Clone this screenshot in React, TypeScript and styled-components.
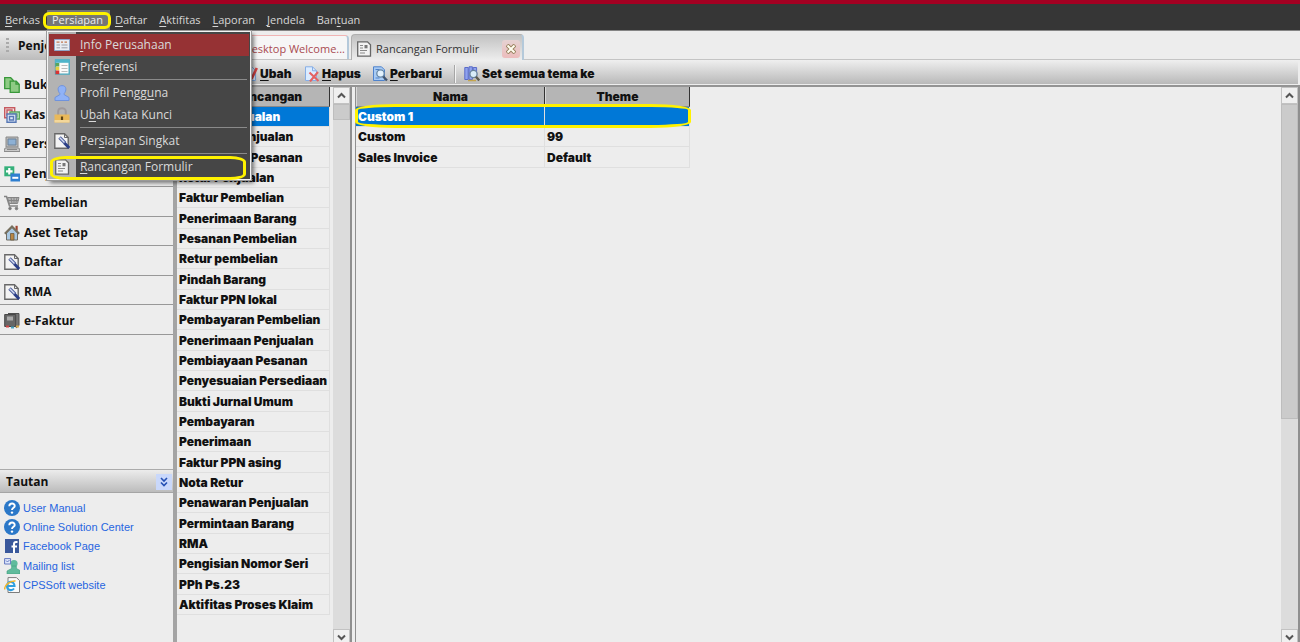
import React from "react";
import styled, { createGlobalStyle, css } from "styled-components";

const ui = `"Open Sans", "Noto Sans", sans-serif`;
const heavy = `Inter, "Liberation Sans", sans-serif`;

const GlobalStyle = createGlobalStyle`
  * { box-sizing: border-box; }
  body { margin: 0; background: #ededed; color: #111; font: 12px/16px ${ui}; }
  button { font: inherit; color: inherit; border: 0; background: none; padding: 0; margin: 0; text-align: left; }
  svg { flex: none; }
  u { text-underline-offset: 2px; }
`;

const App_ = styled.div`
  display: flex;
  flex-direction: column;
  height: 100vh;
  overflow: hidden;
  border-top: 4px solid #a30022;
`;

const MenuBar = styled.nav`
  display: flex;
  flex: none;
  align-items: center;
  height: 27px;
  padding-top: 6px;
  background: #363636;
  border-bottom: 1px solid #858585;
  color: #d6d6d6;
  font-size: 11px;
`;

const MenuSlot = styled.div`
  position: relative;
`;

const MenuButton = styled.button<{ $open?: boolean }>`
  display: block;
  height: 20px;
  padding: 0 7px 0 5px;
  line-height: 20px;
  white-space: nowrap;
  ${(p) => p.$open && css`
    background: #767676;
    color: #ececec;
  `}
`;

const Ring = styled.span<{ $inset: string; $radius: string }>`
  position: absolute;
  inset: ${(p) => p.$inset};
  border: 3px solid #fff200;
  border-radius: ${(p) => p.$radius};
  pointer-events: none;
  z-index: 2;
`;

const DropDown = styled.div`
  position: absolute;
  top: 21px;
  left: 0;
  z-index: 10;
  width: 204px;
  padding: 2px 1px 1px;
  background: linear-gradient(90deg, #b3b3b3 28px, #464646 28px);
  border: 1px solid #f4f4f4;
  outline: 1px solid #9a9a9a;
  box-shadow: 3px 3px 4px rgba(0, 0, 0, 0.5);
  font-size: 12px;
`;

const DropItem = styled.button<{ $hot?: boolean }>`
  position: relative;
  display: flex;
  align-items: center;
  width: 100%;
  height: 22px;
  padding-left: 5px;
  gap: 10px;
  white-space: nowrap;
  background: ${(p) => (p.$hot ? "#963234" : "transparent")};
  color: #dadada;
`;

const DropLine = styled.hr`
  height: 1px;
  margin: 1px 2px 2px 31px;
  border: 0;
  background: #8a8a8a;
`;

const Body = styled.div`
  display: flex;
  flex: 1;
  min-height: 0;
`;

const Sidebar = styled.aside`
  display: flex;
  flex-direction: column;
  flex: none;
  width: 177px;
  border-right: 4px solid #a4a4a4;
`;

const SideTitle = styled.h2`
  display: flex;
  align-items: center;
  gap: 9px;
  height: 29px;
  margin: 0 0 9px;
  padding-left: 6px;
  font: 700 12px/16px ${ui};
  background: linear-gradient(#f0f0f0, #bcbcbc);
`;

const Grip = styled.span`
  width: 3px;
  height: 15px;
  background: repeating-linear-gradient(#aaa 0 2px, transparent 2px 4px);
`;

const SideItem = styled.button`
  display: flex;
  align-items: center;
  gap: 4px;
  width: 100%;
  height: 30px;
  padding: 3px 0 0 4px;
  border-bottom: 1px solid #989898;
  font-weight: 700;
  &:nth-of-type(even) { height: 29px; }
`;

const LinksTitle = styled.h2`
  display: flex;
  align-items: center;
  justify-content: space-between;
  height: 24px;
  margin: auto 0 0;
  padding: 2px 1px 0 6px;
  border-top: 1px solid #ababab;
  border-bottom: 1px solid #a5a5a5;
  font: 700 12px/16px ${ui};
  background: linear-gradient(#ececec, #bcbcbc);
`;

const Collapse = styled.button`
  display: flex;
  width: 16px;
  height: 16px;
  align-items: center;
  justify-content: center;
  background: #c9d8fb;
`;

const LinkList = styled.div`
  display: flex;
  flex-direction: column;
  height: 149px;
  padding: 5px 0 0 4px;
`;

const SideLink = styled.a`
  display: flex;
  align-items: center;
  gap: 3px;
  height: 19px;
  font: 11px/16px "Liberation Sans", sans-serif;
  color: #2765e0;
  text-decoration: none;
  &:nth-of-type(3n) { height: 20px; }
`;

const Main = styled.main`
  display: flex;
  flex: 1;
  flex-direction: column;
  min-width: 0;
`;

const Tabs = styled.div`
  display: flex;
  flex: none;
  align-items: flex-end;
  gap: 2px;
  height: 29px;
  border-bottom: 1px solid #c4c4c4;
  font-size: 11px;
`;

const Tab = styled.button<{ $active?: boolean }>`
  display: flex;
  align-items: center;
  justify-content: flex-end;
  gap: 4px;
  width: ${(p) => (p.$active ? "173px" : "172px")};
  height: 24px;
  padding: 2px 2px 0 4px;
  border-radius: 4px 4px 0 0;
  white-space: nowrap;
  color: ${(p) => (p.$active ? "#333" : "#a94a50")};
  border: 1px solid ${(p) => (p.$active ? "#b0b0b0" : "#f0b4b4")};
  border-right: 2px solid #b4c9da;
  border-bottom: 0;
  background: ${(p) => (p.$active ? "linear-gradient(#c2c2c2, #ededed)" : "#f6f6f6")};
  ${(p) => p.$active && css`
    margin-bottom: -1px;
    height: 26px;
  `}
`;

const TabClose = styled.span`
  display: flex;
  width: 18px;
  height: 18px;
  margin-left: auto;
  align-items: center;
  justify-content: center;
  border-radius: 3px;
  background: linear-gradient(#e6d2d2, #ecbcbc);
`;

const ToolBar = styled.div`
  display: flex;
  flex: none;
  align-items: center;
  height: 24px;
  padding: 3px 0 0 3px;
  margin-right: 2px;
  background: linear-gradient(#efefef, #b9b9b9);
  font: 900 12px/16px ${heavy};
`;

const Tool = styled.button<{ $width?: number }>`
  display: flex;
  align-items: center;
  gap: 2px;
  width: ${(p) => (p.$width ? `${p.$width}px` : "auto")};
  white-space: nowrap;
`;

const ToolDivider = styled.span`
  width: 2px;
  height: 18px;
  margin-right: 8px;
  border-left: 1px solid #a6a6a6;
  border-right: 1px solid #f4f4f4;
`;

const Panels = styled.div`
  display: flex;
  flex: 1;
  min-height: 0;
  border-top: 2px solid #949494;
  margin-top: 1px;
`;

const Panel = styled.section<{ $width?: number }>`
  display: flex;
  justify-content: space-between;
  align-items: flex-start;
  flex: ${(p) => (p.$width ? `0 0 ${p.$width}px` : "1")};
  min-width: 0;
  border-right: 2px solid #8f8f8f;
`;

const Splitter = styled.div`
  width: 4px;
  flex: none;
  border-right: 1px solid #8f8f8f;
`;

const GridWrap = styled.div`
  position: relative;
`;

const Grid = styled.table`
  border-collapse: separate;
  border-spacing: 0;
  table-layout: fixed;
  font: 900 12px/16px ${heavy};

  th, td {
    padding: 1px 2px 0;
    white-space: nowrap;
    overflow: hidden;
  }
  th {
    height: 20px;
    font-weight: 900;
    text-align: center;
    background: #b5b5b5;
    border-left: 1px solid #d8d8d8;
    border-right: 1px solid #333;
    border-bottom: 1px solid #8a8a8a;
  }
  td {
    height: 20px;
    border-right: 1px solid #dfdfdf;
    border-bottom: 1px solid #dfdfdf;
  }
  tbody tr:nth-child(3n) td { height: 21px; }
`;

const Row = styled.tr<{ $selected?: boolean }>`
  ${(p) => p.$selected && css`
    background: #0078d7;
    color: #fff;
  `}
`;

const ScrollBar = styled.div`
  display: flex;
  flex-direction: column;
  width: 17px;
  height: calc(100% + 4px);
  flex: none;
  background: #dcdcdc;
`;

const Arrow = styled.button`
  display: flex;
  flex: none;
  height: 17px;
  align-items: center;
  justify-content: center;
  background: #f0f0f0;
  border: 1px solid #c2c2c2;
`;

const Track = styled.div`
  flex: 1;
`;

const Thumb = styled.div<{ $size: number }>`
  height: ${(p) => p.$size}%;
  background: #cbcbcb;
  border: 1px solid #bdbdbd;
`;

type IconName =
  | "books" | "cash" | "computer" | "sales" | "cart" | "house" | "tool" | "efaktur"
  | "help" | "facebook" | "mail" | "ie" | "card" | "prefs" | "user" | "lock" | "form"
  | "new" | "edit" | "delete" | "refresh" | "theme";

const shapes: Record<IconName, React.ReactNode> = {
  books: (
    <g fill="#8ecb84" stroke="#38983a" strokeWidth="1.3">
      <path d="M.7.7h6l2.500 2.500v8.500h-8.500z" />
      <path d="M6.200 4.200h6l3 3v8.100h-9z" />
      <path d="M12 4.200v3h3" fill="none" />
    </g>
  ),
  cash: (
    <g fill="#f2e4e4" strokeWidth="1.4">
      <path d="M.7.7h10v10h-10zM3 3h5v5H3z" stroke="#c65a60" />
      <path d="M6 5h9.300v7H6zM8 7h5v3H8z" stroke="#5aa860" fill="#e3f2e4" />
      <path d="M3 7h9v8.300H3zM5.500 9.500h4v3.500h-4z" stroke="#5878b4" fill="#dfe8f6" />
    </g>
  ),
  computer: (
    <g>
      <path d="M2 1h12v10H2z" fill="#b8b8b8" stroke="#888" />
      <path d="M4 3h8v6H4z" fill="#8db0d4" stroke="#6c8299" />
      <path d="M1 12h14l1 3.500H0z" fill="#c9c9c9" stroke="#8b8b8b" />
      <path d="M3 13.500h10" stroke="#888" />
    </g>
  ),
  sales: (
    <g>
      <path d="M.3.300h10v10H.3z" fill="#35b07a" />
      <path d="M5.300 2v6.600M2 5.300h6.600" stroke="#fff" strokeWidth="2.200" />
      <path d="M6.500 7.500H16v8H6.500z" fill="#2f7fd0" />
      <path d="M8.300 10.800h6v2h-6z" fill="#fff" />
    </g>
  ),
  cart: (
    <g fill="none" stroke="#858585">
      <path d="M0 1.500h2.500L5.500 11H14" strokeWidth="1.600" />
      <path d="M3.500 2.500H15l-1.500 6H5.200z" fill="#b4b4b4" />
      <path d="M7 2.500l1 6M10 2.500v6M13 2.500l-1.200 6M4 5.500h10.500" />
      <circle cx="6" cy="13.500" r="1.300" fill="#777" />
      <circle cx="12.500" cy="13.500" r="1.300" fill="#777" />
    </g>
  ),
  house: (
    <g>
      <path d="M11.500.8h2.200v5h-2.200z" fill="#a0442e" />
      <path d="M2.500 8L8 2.500 13.500 8v7h-11z" fill="#a9c8e2" stroke="#6f6c64" />
      <path d="M.8 8.800L8 1.500l7.200 7.300" fill="none" stroke="#77705f" strokeWidth="2" />
      <path d="M6.500 8.500H10V15H6.500z" fill="#b98745" stroke="#6b5a40" strokeWidth=".8" />
    </g>
  ),
  tool: (
    <g>
      <path d="M.8.800h9.700l3.700 3.700v10.700H.8z" fill="#f4f4f4" stroke="#686868" strokeWidth="1.400" />
      <path d="M10.500.8v3.700h3.700" fill="none" stroke="#686868" />
      <path d="M5.500 4.500l5.500 5.500" stroke="#4d5f9d" strokeWidth="3.400" />
      <path d="M5.800 4.800l4.700 4.700" stroke="#d7def2" strokeWidth="1.300" />
      <path d="M10.500 10l4.700 5" stroke="#2b3f87" strokeWidth="3" />
    </g>
  ),
  efaktur: (
    <g>
      <path d="M4 .500h11v12l-3 2.500" fill="#777" stroke="#505050" />
      <path d="M.7 1.500h11v12H.7z" fill="#666" stroke="#484848" />
      <path d="M3 3.500h6v4H3z" fill="#aaa" />
      <path d="M2 13.500h3" stroke="#cf4546" strokeWidth="2" />
      <path d="M7 14.500h3" stroke="#48a5c4" strokeWidth="2" />
      <path d="M12 13.500h3" stroke="#d7a748" strokeWidth="2" />
    </g>
  ),
  help: (
    <g>
      <circle cx="8" cy="8" r="8" fill="#2b78c8" />
      <path d="M5.300 6.200C5.400 2.600 11 2.800 10.700 6.100 10.600 7.800 8 8 8 10.100" fill="none" stroke="#fff" strokeWidth="1.900" />
      <circle cx="8" cy="12.600" r="1.200" fill="#fff" />
    </g>
  ),
  facebook: (
    <g>
      <path d="M1 1h14v14H1z" fill="#3a589b" />
      <path d="M13.500 4H12q-2 0-2 2v9M7.500 8.500H13" fill="none" stroke="#fff" strokeWidth="2" />
    </g>
  ),
  mail: (
    <g>
      <circle cx="10" cy="5.500" r="3.600" fill="#5fbb9c" />
      <path d="M7.800 8h4.400l.3 2.500 3.500 2V16H3v-3l4.500-2.500z" fill="#5fbb9c" stroke="#3f9d7e" strokeWidth=".6" />
      <path d="M.6.600h6V6h-6z" fill="#dfe7fb" stroke="#6478c0" />
      <path d="M2 2.500L3.500 4l2-2" fill="none" stroke="#6478c0" />
    </g>
  ),
  ie: (
    <g>
      <path d="M4 .600h8.500l3 3v11.900H4z" fill="#fafafa" stroke="#7d7d7d" />
      <path d="M10 11.500c-2 2.800-7 2-7-2.500 0-5.500 7.500-5.500 7.500 0h-7" fill="none" stroke="#2f9fe0" strokeWidth="2.100" />
      <path d="M.6 12.500C.5 8 6 3.500 11.500 4" fill="none" stroke="#efb52c" strokeWidth="1.500" />
    </g>
  ),
  card: (
    <g>
      <path d="M.5 2.500h15v11H.5z" fill="#e9ecf2" stroke="#8fa5c8" />
      <path d="M2.500 5.200h3M7 5.200h2M10.500 5.200h2.500" stroke="#c27852" strokeWidth="1.200" />
      <path d="M2.500 8h3.500M7.500 8h6M2.500 10.800h3.500M7.500 10.800h6" stroke="#9a9da5" />
    </g>
  ),
  prefs: (
    <g>
      <path d="M1.500.800h13.700v14.400H1.500z" fill="#fafafa" stroke="#46a6bd" strokeWidth="1.300" />
      <path d="M1 .500h14.700v3.300H1z" fill="#4fb4ca" />
      <path d="M1.500 4h3.800v3.500H1.500z" fill="#5aa55c" />
      <path d="M1.500 7.800h3.800v3.500H1.500z" fill="#e4ce42" />
      <path d="M1.500 11.500h3.800v3.700H1.500z" fill="#d93434" />
      <path d="M7.500 6.500h6M7.500 9.500h6M7.500 12.500h6" stroke="#bbb" />
    </g>
  ),
  user: (
    <path d="M8 .600c5 0 4.500 5.500 2.200 7.800v1.300l4.800 2.800v3H1v-3l4.800-2.800V8.400C3.500 6.100 3 .6 8 .6z" fill="#90b2f7" stroke="#6f93dd" />
  ),
  lock: (
    <g>
      <path d="M4.200 8V4.500c0-4.500 7.600-4.500 7.600 0V8" fill="none" stroke="#a09a9c" strokeWidth="2" />
      <path d="M.5 7.500h15v8H.5z" fill="#e9b95a" />
      <path d="M.5 13h15v2.500H.5z" fill="#f3d79a" />
      <path d="M8 9.500V13" stroke="#5e4517" strokeWidth="2.200" />
    </g>
  ),
  form: (
    <g>
      <path d="M1.700.800h9.800l3 3v11.400H1.700z" fill="#f2f2f2" stroke="#666" strokeWidth="1.300" />
      <path d="M4 4.500h3M4 7h3M4 9.500h7M4 12h5" stroke="#888" />
      <path d="M8.500 4h3v3.300h-3z" fill="#777" />
    </g>
  ),
  new: <path d="M2.500 1.500h8l3 3v10h-11z" fill="#dcecff" stroke="#7ba6dd" />,
  edit: (
    <g>
      <path d="M2.500 1.500h8l3 3v10h-11z" fill="#dcecff" stroke="#7ba6dd" />
      <path d="M14.800 2l-5.300 11" stroke="#d34242" strokeWidth="2.600" />
    </g>
  ),
  delete: (
    <g>
      <path d="M1.500.800h7l4 4v9.700h-11z" fill="#dcecff" stroke="#86aee6" />
      <path d="M8.500.8v4h4" fill="none" stroke="#86aee6" />
      <path d="M5.500 6.500l9 8.500M14 6l-8 9.500" stroke="#e46262" strokeWidth="2.100" />
    </g>
  ),
  refresh: (
    <g>
      <path d="M1.500.800h8l3 3v10.700h-11z" fill="#a8cbf4" stroke="#4f83cc" />
      <path d="M3.500 3.500h4M3.500 12h4" stroke="#4f83cc" />
      <circle cx="8.500" cy="7.500" r="3.700" fill="#e3f2fd" stroke="#6687a7" strokeWidth="1.300" />
      <path d="M11.200 10.500l3.800 4" stroke="#43566e" strokeWidth="2.400" />
    </g>
  ),
  theme: (
    <g>
      <path d="M.8 1.500h3.400v12H.8zM5 .800h3.400v12.700H5zM9.200 1.500h3.400v10H9.200z" fill="#8fa2ee" stroke="#5b6cc8" />
      <circle cx="9.500" cy="8" r="3.600" fill="#d8ecf8" stroke="#68839a" strokeWidth="1.300" />
      <path d="M12 10.800l3.200 3.600" stroke="#5d5a4c" strokeWidth="2.400" />
      <path d="M4 14.500h8" stroke="#c4a54c" strokeWidth="1.500" />
    </g>
  ),
};

const Icon = ({ name }: { name: IconName }) => (
  <svg width="16" height="16" viewBox="0 0 16 16" aria-hidden="true">
    {shapes[name]}
  </svg>
);

/** Renders a caption with its "&"-marked access key underlined. */
const Caption = ({ text }: { text: string }) => {
  const at = text.indexOf("&");
  if (at < 0) return <span>{text}</span>;
  return (
    <span>
      {text.slice(0, at)}
      <u>{text[at + 1]}</u>
      {text.slice(at + 2)}
    </span>
  );
};

const Chevron = ({ up }: { up?: boolean }) => (
  <svg width="9" height="7" viewBox="0 0 9 7" aria-hidden="true">
    <path d={up ? "M1 5.500L4.500 2 8 5.500" : "M1 1.500L4.500 5 8 1.500"} fill="none" stroke="#555" strokeWidth="2" />
  </svg>
);

const Scroll = ({ size }: { size: number }) => (
  <ScrollBar>
    <Arrow aria-label="Gulir ke atas"><Chevron up /></Arrow>
    <Track><Thumb $size={size} /></Track>
    <Arrow aria-label="Gulir ke bawah"><Chevron /></Arrow>
  </ScrollBar>
);

const dropItems: ({ icon: IconName; text: string; hot?: boolean; marked?: boolean } | null)[] = [
  { icon: "card", text: "&Info Perusahaan", hot: true },
  { icon: "prefs", text: "Pre&ferensi" },
  null,
  { icon: "user", text: "Profil Pengg&una" },
  { icon: "lock", text: "U&bah Kata Kunci" },
  null,
  { icon: "tool", text: "Per&siapan Singkat" },
  null,
  { icon: "form", text: "&Rancangan Formulir", marked: true },
];

const modules: [IconName, string][] = [
  ["books", "Buku"],
  ["cash", "Kas"],
  ["computer", "Persedia"],
  ["sales", "Penjual"],
  ["cart", "Pembelian"],
  ["house", "Aset Tetap"],
  ["tool", "Daftar"],
  ["tool", "RMA"],
  ["efaktur", "e-Faktur"],
];

const links: [IconName, string][] = [
  ["help", "User Manual"],
  ["help", "Online Solution Center"],
  ["facebook", "Facebook Page"],
  ["mail", "Mailing list"],
  ["ie", "CPSSoft website"],
];

const designs = [
  "Faktur Penjualan", "Pesanan Penjualan", "Pengiriman Pesanan", "Retur Penjualan",
  "Faktur Pembelian", "Penerimaan Barang", "Pesanan Pembelian", "Retur pembelian",
  "Pindah Barang", "Faktur PPN lokal", "Pembayaran Pembelian", "Penerimaan Penjualan",
  "Pembiayaan Pesanan", "Penyesuaian Persediaan", "Bukti Jurnal Umum", "Pembayaran",
  "Penerimaan", "Faktur PPN asing", "Nota Retur", "Penawaran Penjualan",
  "Permintaan Barang", "RMA", "Pengisian Nomor Seri", "PPh Ps.23", "Aktifitas Proses Klaim",
];

const templates = [["Custom 1", ""], ["Custom", "99"], ["Sales Invoice", "Default"]];

const PersiapanMenu = () => (
  <DropDown>
    {dropItems.map((item, i) =>
      item ? (
        <DropItem key={i} $hot={item.hot}>
          <Icon name={item.icon} />
          <Caption text={item.text} />
          {item.marked && <Ring $inset="0 3px -2px 1px" $radius="16px / 6px" />}
        </DropItem>
      ) : (
        <DropLine key={i} />
      )
    )}
  </DropDown>
);

export default function App() {
  return (
    <App_>
      <GlobalStyle />
      <MenuBar>
        <MenuSlot><MenuButton><Caption text="&Berkas" /></MenuButton></MenuSlot>
        <MenuSlot>
          <MenuButton $open><Caption text="&Persiapan" /></MenuButton>
          <Ring $inset="2px -1px 1px -4px" $radius="6px" />
          <PersiapanMenu />
        </MenuSlot>
        {["&Daftar", "&Aktifitas", "&Laporan", "&Jendela", "Ban&tuan"].map((t) => (
          <MenuSlot key={t}><MenuButton><Caption text={t} /></MenuButton></MenuSlot>
        ))}
      </MenuBar>
      <Body>
        <Sidebar>
          <SideTitle><Grip />Penjelajah</SideTitle>
          {modules.map(([icon, text]) => (
            <SideItem key={text}><Icon name={icon} />{text}</SideItem>
          ))}
          <LinksTitle>
            Tautan
            <Collapse aria-label="Ciutkan">
              <svg width="8" height="10" viewBox="0 0 8 10" aria-hidden="true">
                <path d="M1 1l3 3 3-3M1 5.500l3 3 3-3" fill="none" stroke="#2450b4" strokeWidth="1.600" />
              </svg>
            </Collapse>
          </LinksTitle>
          <LinkList>
            {links.map(([icon, text]) => (
              <SideLink key={text} href="#"><Icon name={icon} />{text}</SideLink>
            ))}
          </LinkList>
        </Sidebar>
        <Main>
          <Tabs>
            <Tab><Icon name="form" /><span>Accurate Desktop Welcome...</span></Tab>
            <Tab $active>
              <Icon name="form" />
              <span>Rancangan Formulir</span>
              <TabClose>
                <svg width="10" height="10" viewBox="0 0 10 10" aria-hidden="true">
                  <path d="M1 1l8 8M9 1L1 9" stroke="#96805c" strokeWidth="4" />
                  <path d="M1.500 1.500l7 7M8.500 1.500l-7 7" stroke="#fffdf0" strokeWidth="2" />
                </svg>
              </TabClose>
            </Tab>
          </Tabs>
          <ToolBar>
            <Tool $width={62}><Icon name="new" /><Caption text="&Baru" /></Tool>
            <Tool $width={62}><Icon name="edit" /><Caption text="&Ubah" /></Tool>
            <Tool $width={68}><Icon name="delete" /><Caption text="&Hapus" /></Tool>
            <Tool $width={82}><Icon name="refresh" /><Caption text="&Perbarui" /></Tool>
            <ToolDivider />
            <Tool><Icon name="theme" /><Caption text="Set semua tema ke" /></Tool>
          </ToolBar>
          <Panels>
            <Panel $width={175}>
              <Grid>
                <colgroup><col width="153" /></colgroup>
                <thead><tr><th>Tipe Rancangan</th></tr></thead>
                <tbody>
                  {designs.map((d, i) => (
                    <Row key={d} $selected={i === 0}><td>{d}</td></Row>
                  ))}
                </tbody>
              </Grid>
              <Scroll size={3} />
            </Panel>
            <Splitter />
            <Panel>
              <GridWrap>
                <Grid>
                  <colgroup><col width="189" /><col width="145" /></colgroup>
                  <thead><tr><th>Nama</th><th>Theme</th></tr></thead>
                  <tbody>
                    {templates.map(([name, theme], i) => (
                      <Row key={name} $selected={i === 0}><td>{name}</td><td>{theme}</td></Row>
                    ))}
                  </tbody>
                </Grid>
                <Ring $inset="17px -1px 40px -1px" $radius="40px / 6px" />
              </GridWrap>
              <Scroll size={60} />
            </Panel>
          </Panels>
        </Main>
      </Body>
    </App_>
  );
}
